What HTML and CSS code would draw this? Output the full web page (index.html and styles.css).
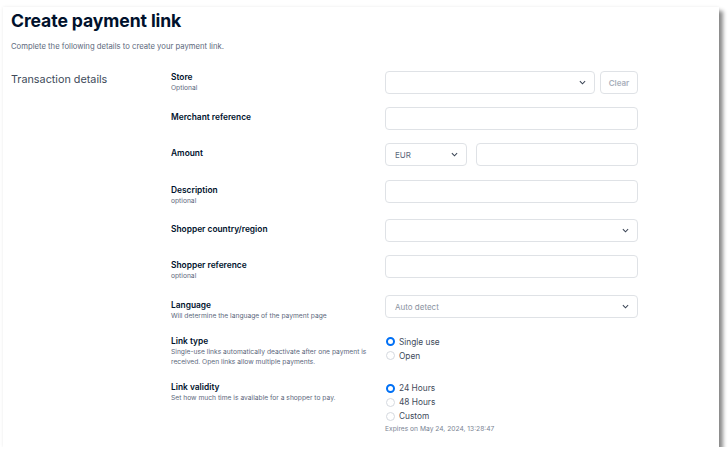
FILE: index.html
```html
<!DOCTYPE html>
<html lang="en">
	<head>
		<meta charset="UTF-8" />
		<meta name="viewport" content="width=device-width, initial-scale=1.0" />
		<title>Create payment link</title>
		<link rel="stylesheet" href="styles.css">
	</head>
	<body>
		<div class="card">
			<h1>Create payment link</h1>
			<p class="intro">Complete the following details to create your payment link.</p>

			<div class="section">
				<h2>Transaction details</h2>
				<div class="fields">
					<div class="row">
						<div class="label label-tight">
							<div class="name">Store</div>
							<div class="hint">Optional</div>
						</div>
						<div class="control">
							<div class="select store-select">
								<span></span>
								<svg class="chevron" viewBox="0 0 8 5"><path d="M1 1l3 3 3-3" /></svg>
							</div>
							<button class="clear">Clear</button>
						</div>
					</div>

					<div class="row">
						<div class="label">
							<div class="name">Merchant reference</div>
						</div>
						<div class="control">
							<div class="input"></div>
						</div>
					</div>

					<div class="row">
						<div class="label">
							<div class="name">Amount</div>
						</div>
						<div class="control amount">
							<div class="select currency">
								<span>EUR</span>
								<svg class="chevron" viewBox="0 0 8 5"><path d="M1 1l3 3 3-3" /></svg>
							</div>
							<div class="input"></div>
						</div>
					</div>

					<div class="row">
						<div class="label">
							<div class="name">Description</div>
							<div class="hint">optional</div>
						</div>
						<div class="control">
							<div class="input"></div>
						</div>
					</div>

					<div class="row">
						<div class="label">
							<div class="name">Shopper country/region</div>
						</div>
						<div class="control">
							<div class="select wide">
								<span></span>
								<svg class="chevron" viewBox="0 0 8 5"><path d="M1 1l3 3 3-3" /></svg>
							</div>
						</div>
					</div>

					<div class="row">
						<div class="label">
							<div class="name">Shopper reference</div>
							<div class="hint">optional</div>
						</div>
						<div class="control">
							<div class="input"></div>
						</div>
					</div>

					<div class="row">
						<div class="label">
							<div class="name">Language</div>
							<div class="hint">Will determine the language of the payment page</div>
						</div>
						<div class="control">
							<div class="select wide">
								<span class="placeholder">Auto detect</span>
								<svg class="chevron" viewBox="0 0 8 5"><path d="M1 1l3 3 3-3" /></svg>
							</div>
						</div>
					</div>

					<div class="row">
						<div class="label label-tight">
							<div class="name">Link type</div>
							<div class="hint long">Single-use links automatically deactivate after one payment is received. Open links allow multiple payments.</div>
						</div>
						<div class="radios">
							<label class="radio"><span class="dot checked"></span>Single use</label>
							<label class="radio"><span class="dot"></span>Open</label>
						</div>
					</div>

					<div class="row">
						<div class="label label-tight">
							<div class="name">Link validity</div>
							<div class="hint long">Set how much time is available for a shopper to pay.</div>
						</div>
						<div class="radios">
							<label class="radio"><span class="dot checked"></span>24 Hours</label>
							<label class="radio"><span class="dot"></span>48 Hours</label>
							<label class="radio"><span class="dot"></span>Custom</label>
							<div class="expires">Expires on May 24, 2024, 13:28:47</div>
						</div>
					</div>
				</div>
			</div>
		</div>
	</body>
</html>
```

FILE: styles.css
```css
/* Page */
body {
	margin: 0;
	background-color: #fff;
	font-family: Inter, "Noto Sans", sans-serif;
	color: #00112c;
}
.card {
	margin: 7px 0 0 3px;
	width: 716px;
	height: 440px;
	padding-top: 3px;
	box-sizing: border-box;
	background-color: #fff;
	overflow: hidden;
	box-shadow: 4px 4px 4px rgba(0, 0, 0, 0.45), 0 0 3px rgba(0, 0, 0, 0.08);
}
h1 {
	margin: 0 0 0 8px;
	font-size: 17.6px;
	line-height: 22px;
	font-weight: 700;
	letter-spacing: -0.1px;
}
.intro {
	margin: 9px 0 0 8px;
	font-size: 7.7px;
	line-height: 12px;
	color: #5c687c;
}

/* Form section */
.section {
	display: flex;
	margin-top: 18px;
	width: 628px;
	padding: 0 0 13px 8px;
	border-bottom: 1px solid #d9dce1;
}
h2 {
	width: 160px;
	margin: 2px 0 0 0;
	font-size: 10.8px;
	line-height: 14px;
	font-weight: 400;
	color: #404a5a;
}
.fields {
	display: flex;
	flex-direction: column;
	gap: 13.2px;
}
.row {
	display: flex;
	align-items: flex-start;
}
.label {
	width: 214px;
	padding-top: 4px;
}
.label-tight {
	padding-top: 0;
}
.name {
	font-size: 8.4px;
	line-height: 12px;
	font-weight: 600;
}
.hint {
	font-size: 6.7px;
	line-height: 10.5px;
	color: #5c687c;
}
.hint.long {
	width: 200px;
}
.control {
	display: flex;
	gap: 5px;
	width: 253px;
}
.control.amount {
	gap: 9px;
}

/* Inputs */
.input,
.select {
	height: 23px;
	box-sizing: border-box;
	border: 1px solid #dfe2e6;
	border-radius: 4px;
	background-color: #fff;
}
.input {
	flex: 1;
}
.select {
	display: flex;
	align-items: center;
	justify-content: space-between;
	padding: 0 8px 0 9px;
	font-size: 8px;
	color: #5c687c;
}
.store-select {
	width: 210px;
}
.currency {
	width: 82px;
	padding-right: 8px;
}
.wide {
	width: 253px;
}
.placeholder {
	color: #8a93a1;
}
.chevron {
	width: 7px;
	height: 5px;
	fill: none;
	stroke: #3c4656;
	stroke-width: 1.2;
}
.clear {
	width: 38px;
	height: 23px;
	padding: 0;
	border: 1px solid #dfe2e6;
	border-radius: 4px;
	background-color: #fff;
	font-family: inherit;
	font-size: 8px;
	font-weight: 600;
	color: #a9b0bb;
}

/* Radios */
.radios {
	display: flex;
	flex-direction: column;
}
.radio {
	display: flex;
	align-items: center;
	gap: 4px;
	height: 14px;
	font-size: 8.3px;
	color: #404a5a;
}
.dot {
	width: 9px;
	height: 9px;
	box-sizing: border-box;
	margin-left: 1px;
	border: 1px solid #d5d9df;
	border-radius: 50%;
	background-color: #fff;
}
.dot.checked {
	border: 2.5px solid #0070f5;
}
.expires {
	margin-top: 1px;
	font-size: 6.7px;
	line-height: 10px;
	color: #7a8494;
}
```
